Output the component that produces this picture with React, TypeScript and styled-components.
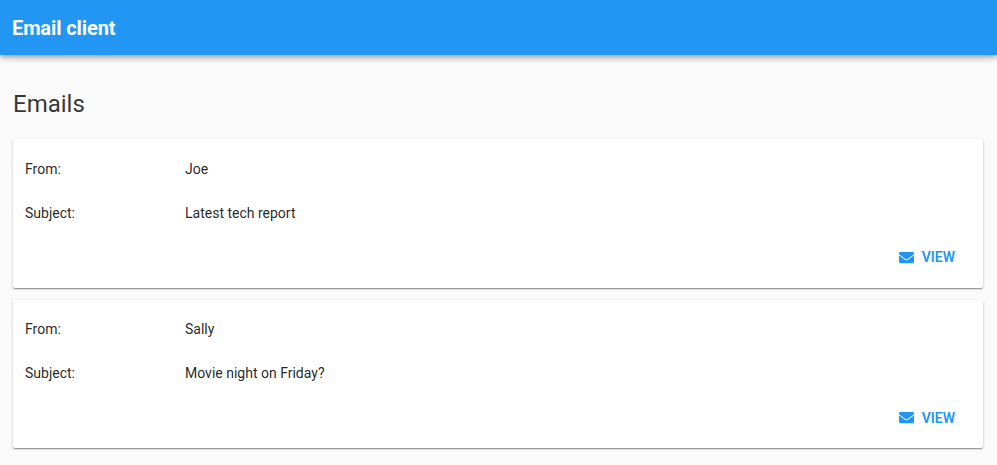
import { FaEnvelope } from "react-icons/fa";
import styled, { createGlobalStyle } from "styled-components";

const GlobalStyle = createGlobalStyle`
  html, body {
    margin: 0;
    padding: 0;
    background: #fafafa;
    font-family: Roboto, "Liberation Sans", sans-serif;
    overflow: hidden;
  }
`;

const emails = [
  { id: 1, from: "Joe", subject: "Latest tech report" },
  { id: 2, from: "Sally", subject: "Movie night on Friday?" },
];

function App() {
  return (
    <Page>
      <GlobalStyle />
      <Toolbar>Email client</Toolbar>
      <Content>
        <Heading>Emails</Heading>
        {emails.map((email) => (
          <Card key={email.id}>
            <Row>
              <Label>From:</Label>
              <Value>{email.from}</Value>
            </Row>
            <Row>
              <Label>Subject:</Label>
              <Value>{email.subject}</Value>
            </Row>
            <Actions>
              <ViewButton>
                <FaEnvelope />
                View
              </ViewButton>
            </Actions>
          </Card>
        ))}
      </Content>
    </Page>
  );
}

export default App;

const Page = styled.div`
  min-height: 100vh;
`;

const Toolbar = styled.header`
  height: 55px;
  padding: 0 12px;
  display: flex;
  align-items: center;
  background: #2196f3;
  color: #fff;
  font-size: 20px;
  font-weight: 700;
  letter-spacing: -0.1px;
  box-shadow: 0 2px 4px -1px rgba(0, 0, 0, 0.2), 0 4px 5px 0 rgba(0, 0, 0, 0.14),
    0 1px 10px 0 rgba(0, 0, 0, 0.12);
`;

const Content = styled.main`
  padding: 0 14px 0 13px;
`;

const Heading = styled.h1`
  margin: 0;
  padding: 33px 0 19px;
  font-size: 24px;
  line-height: 32px;
  font-weight: 400;
  color: rgba(0, 0, 0, 0.8);
`;

const Card = styled.section`
  height: 148.5px;
  margin-bottom: 12px;
  box-sizing: border-box;
  padding: 7.5px 12px 0;
  background: #fff;
  border-radius: 2px;
  box-shadow: 0 1px 3px 0 rgba(0, 0, 0, 0.2), 0 1px 1px 0 rgba(0, 0, 0, 0.2),
    0 2px 1px -1px rgba(0, 0, 0, 0.14);
`;

const Row = styled.div`
  height: 44px;
  display: flex;
  align-items: center;
  font-size: 14px;
  color: rgba(0, 0, 0, 0.87);
`;

const Label = styled.div`
  width: 160px;
`;

const Value = styled.div`
  flex: 1;
`;

const Actions = styled.div`
  display: flex;
  justify-content: flex-end;
  margin-top: 4.7px;
`;

const ViewButton = styled.button`
  height: 36px;
  padding: 0 16px;
  display: flex;
  align-items: center;
  gap: 8px;
  border: none;
  background: transparent;
  color: #2196f3;
  font-family: inherit;
  font-size: 14px;
  font-weight: 600;
  text-transform: uppercase;

  svg {
    width: 15px;
    height: 15px;
  }
`;
